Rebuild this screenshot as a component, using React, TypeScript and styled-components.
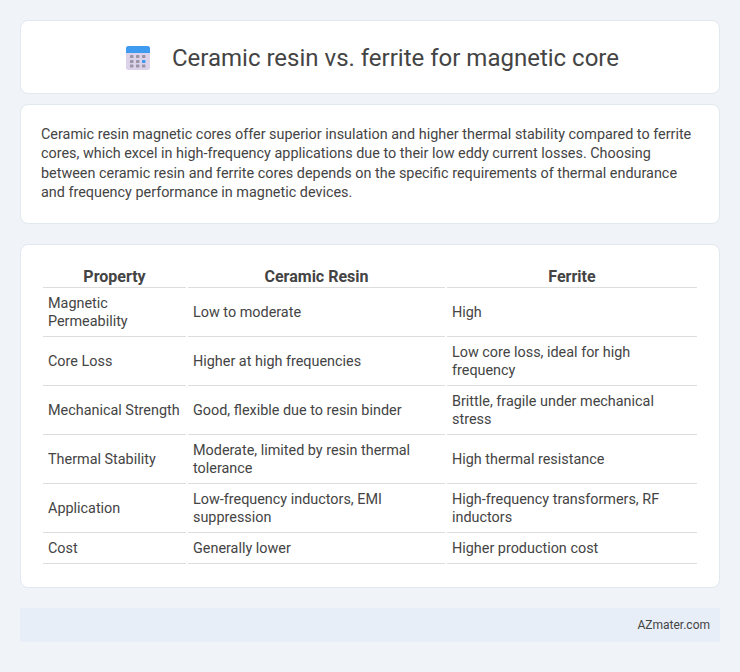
import React from "react";
import styled, { createGlobalStyle } from "styled-components";

const Global = createGlobalStyle`
  html, body { margin: 0; padding: 0; }
  body { background: #f0f4f9; font-family: Roboto, "Liberation Sans", sans-serif; color: #444; }
`;
const Page = styled.div`
  display: flex; flex-direction: column; padding: 20px; height: 672px; box-sizing: border-box;
`;
const Card = styled.section<{ $gap: number }>`
  background: #fff; border: 1px solid #e2e8f0; border-radius: 8px; margin-bottom: ${p => p.$gap}px;
`;
const Header = styled(Card)`
  display: flex; align-items: center; justify-content: center; gap: 22px; height: 74px; box-sizing: border-box;
  padding: 2px 0 0 5px;
`;
const Title = styled.h1`
  margin: 0; font-size: 24px; font-weight: 400; color: #444; line-height: 28px;
`;
const Intro = styled(Card)`
  padding: 20px; font-size: 14.4px; line-height: 19.44px; color: #444;
  box-sizing: border-box; height: 120px;
  p { margin: 0; }
`;
const TableCard = styled(Card)`
  padding: 20px; box-sizing: border-box; height: 344px;
`;
const Table = styled.table`
  width: 100%; border-collapse: separate; border-spacing: 2px; table-layout: fixed;
  font-size: 14.4px; color: #444;
`;
const Th = styled.th<{ $w: number }>`
  box-sizing: border-box; width: ${p => p.$w}px; font-size: 16px; font-weight: 700; line-height: 20px; padding: 0 5px;
  text-align: center; border-bottom: 1px solid #ddd; color: #444;
`;
const Td = styled.td`
  padding: 5px; line-height: 18px; border-bottom: 1px solid #ddd; vertical-align: middle;
`;
const Footer = styled.footer`
  background: #e8eef8; height: 34px; display: flex; align-items: center; justify-content: flex-end;
  padding: 0 10px; font-size: 12px; color: #444;
`;

const rows = [
  ["Magnetic Permeability", "Low to moderate", "High"],
  ["Core Loss", "Higher at high frequencies", "Low core loss, ideal for high frequency"],
  ["Mechanical Strength", "Good, flexible due to resin binder", "Brittle, fragile under mechanical stress"],
  ["Thermal Stability", "Moderate, limited by resin thermal tolerance", "High thermal resistance"],
  ["Application", "Low-frequency inductors, EMI suppression", "High-frequency transformers, RF inductors"],
  ["Cost", "Generally lower", "Higher production cost"],
];

const CalendarIcon = () => (
  <svg width="24" height="24" viewBox="0 0 24 24" aria-hidden="true">
    <rect x="0" y="0" width="24" height="24" rx="2.5" fill="#dcd3ea" />
    <path d="M0 7V2.5A2.5 2.5 0 0 1 2.5 0h19A2.5 2.5 0 0 1 24 2.5V7z" fill="#3f9bf0" />
    {[4, 10, 16].map(x => [9, 14, 18.5].map(y => (
      <rect key={`${x}-${y}`} x={x} y={y} width="3.4" height="3" rx="0.5" fill={x === 16 && y === 14 ? "#3f9bf0" : "#9b95a8"} />
    )))}
  </svg>
);

export default function App() {
  return (
    <Page>
      <Global />
      <Header $gap={10}>
        <CalendarIcon />
        <Title>Ceramic resin vs. ferrite for magnetic core</Title>
      </Header>
      <Intro $gap={20}>
        <p>Ceramic resin magnetic cores offer superior insulation and higher thermal stability compared to ferrite cores, which excel in high-frequency applications due to their low eddy current losses. Choosing between ceramic resin and ferrite cores depends on the specific requirements of thermal endurance and frequency performance in magnetic devices.</p>
      </Intro>
      <TableCard $gap={20}>
        <Table>
          <thead>
            <tr>
              <Th $w={143}>Property</Th>
              <Th $w={257}>Ceramic Resin</Th>
              <Th $w={250}>Ferrite</Th>
            </tr>
          </thead>
          <tbody>
            {rows.map(r => (
              <tr key={r[0]}>{r.map(c => <Td key={c}>{c}</Td>)}</tr>
            ))}
          </tbody>
        </Table>
      </TableCard>
      <Footer>AZmater.com</Footer>
    </Page>
  );
}
